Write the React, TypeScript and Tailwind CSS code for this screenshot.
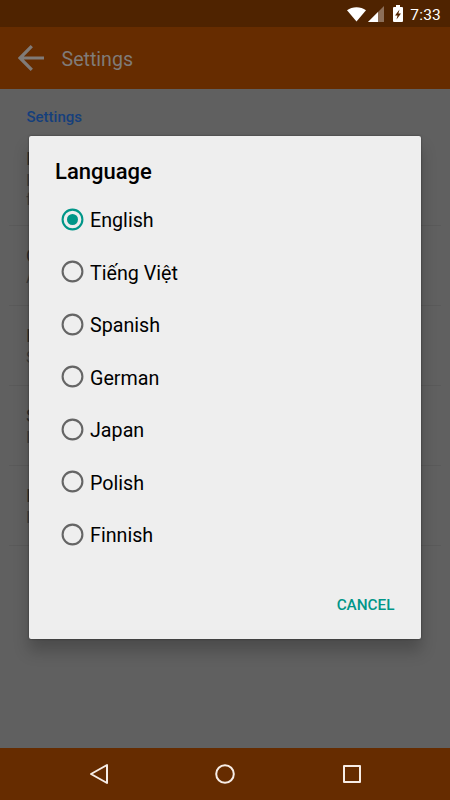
import React, { useState } from "react";
import clsx from "clsx";

const languages = ["English", "Tiếng Việt", "Spanish", "German", "Japan", "Polish", "Finnish"];

const preferences = [
  { title: "I", lines: ["I", "f"], size: "h-[90px] pt-[11px]" },
  { title: "C", lines: ["A"], size: "h-20 pt-[18px]" },
  { title: "I", lines: ["S"], size: "h-20 pt-[18px]" },
  { title: "S", lines: ["I"], size: "h-20 pt-[18px]" },
  { title: "I", lines: ["I"], size: "h-20 pt-[18px]" },
];

function StatusBar() {
  return (
    <div className="h-[27px] shrink-0 bg-[#4f2300] flex items-center justify-end pr-[9px] text-white">
      <svg width="19" height="15" viewBox="0 0 19 15" className="mt-px" fill="currentColor">
        <path d="M9.5 14.6 0 3.3C2.700 1.200 6 .2 9.500 .2S16.300 1.200 19 3.300Z" />
      </svg>
      <svg width="16" height="16" viewBox="0 0 16 16" className="ml-[2px]" fill="currentColor">
        <path d="M16 0V16H0Z" opacity="0.35" />
        <path d="M10 6V16H0Z" />
      </svg>
      <svg width="10" height="17" viewBox="0 0 10 17" className="ml-[9px]">
        <path
          d="M3 0H7V2H9Q10 2 10 3V16Q10 17 9 17H1Q0 17 0 16V3Q0 2 1 2H3Z"
          fill="white"
        />
        <path d="M6.500 4.500 2 10.500H4.600L3.500 14.500L8 8.500H5.400Z" fill="#4f2300" />
      </svg>
      <span className="ml-[7px] mt-[2px] text-[15.5px] leading-5 tracking-[0.2px]">7:33</span>
    </div>
  );
}

function AppBar() {
  return (
    <header className="h-[62px] shrink-0 bg-[#662c00] flex items-center pl-[18px] text-[#807b78]">
      <svg width="26" height="26" viewBox="0 0 26 26" fill="none" stroke="currentColor" strokeWidth="3.200">
        <path d="M26 13H2.500M13.800 1.200 2 13 13.800 24.800" />
      </svg>
      <h1 className="ml-[17.500px] mt-[3px] text-[19.600px] leading-7">Settings</h1>
    </header>
  );
}

function PreferenceList() {
  return (
    <main className="flex-1 bg-[#606060] px-[9px]">
      <h2 className="h-[47px] pl-[17.500px] pt-[18px] text-[15px] leading-5 font-medium text-[#153f7c]">Settings</h2>
      {preferences.map((item, index) => (
        <div
          key={index}
          className={clsx("pl-[17px] border-b border-[#5a5a5a] text-[#2c2c2c]", item.size)}
        >
          <div className="text-lg leading-6">{item.title}</div>
          {item.lines.map((line) => (
            <div key={line} className="text-base leading-[19px] text-[#3c3c3c]">{line}</div>
          ))}
        </div>
      ))}
    </main>
  );
}

function Radio({ checked }: { checked: boolean }) {
  return (
    <svg
      width="23"
      height="23"
      viewBox="0 0 23 23"
      className={checked ? "text-[#009688]" : "text-[#656565]"}
    >
      <circle cx="11.500" cy="11.500" r="9.900" fill="none" stroke="currentColor" strokeWidth="2.100" />
      {checked && <circle cx="11.500" cy="11.500" r="5.500" fill="currentColor" />}
    </svg>
  );
}

function LanguageDialog() {
  const [selected, setSelected] = useState("English");

  return (
    <div
      role="dialog"
      className="absolute left-[29px] top-[136px] w-[392px] h-[503px] flex flex-col rounded-[2px] bg-[#eeeeee] text-black shadow-[0_0_2px_rgba(0,0,0,0.5),0_12px_16px_rgba(0,0,0,0.22)]"
    >
      <h2 className="h-[57px] shrink-0 pl-[26px] pt-[21.500px] text-[22px] leading-7 font-medium">Language</h2>
      {languages.map((language) => (
        <button
          key={language}
          type="button"
          className="h-[52.5px] shrink-0 flex items-center pl-[31.500px] text-[19.700px] leading-7"
          onClick={() => setSelected(language)}
        >
          <Radio checked={selected === language} />
          <span className="ml-[6.500px] mt-[3.500px]">{language}</span>
        </button>
      ))}
      <div className="flex-1 flex items-end justify-end pr-[26.500px] pb-[24.500px]">
        <button type="button" className="text-[15.300px] leading-5 font-medium text-[#009688]">CANCEL</button>
      </div>
    </div>
  );
}

function NavigationBar() {
  return (
    <nav className="h-[52px] shrink-0 bg-[#662c00] flex items-center justify-between pl-[88.500px] pr-[88.500px] text-[#f7ede6]">
      <svg width="20" height="22" viewBox="0 0 20 22" fill="none" stroke="currentColor" strokeWidth="2" strokeLinejoin="round">
        <path d="M18 2V20L2 11Z" />
      </svg>
      <svg width="20" height="20" viewBox="0 0 20 20" fill="none" stroke="currentColor" strokeWidth="2">
        <circle cx="10" cy="10" r="8.800" />
      </svg>
      <svg width="20" height="20" viewBox="0 0 20 20" fill="none" stroke="currentColor" strokeWidth="2" strokeLinejoin="round">
        <path d="M2 2H18V18H2Z" />
      </svg>
    </nav>
  );
}

export default function App() {
  return (
    <div className="relative w-[450px] h-[800px] overflow-hidden flex flex-col font-[Roboto,sans-serif]">
      <StatusBar />
      <AppBar />
      <PreferenceList />
      <NavigationBar />
      <LanguageDialog />
    </div>
  );
}
